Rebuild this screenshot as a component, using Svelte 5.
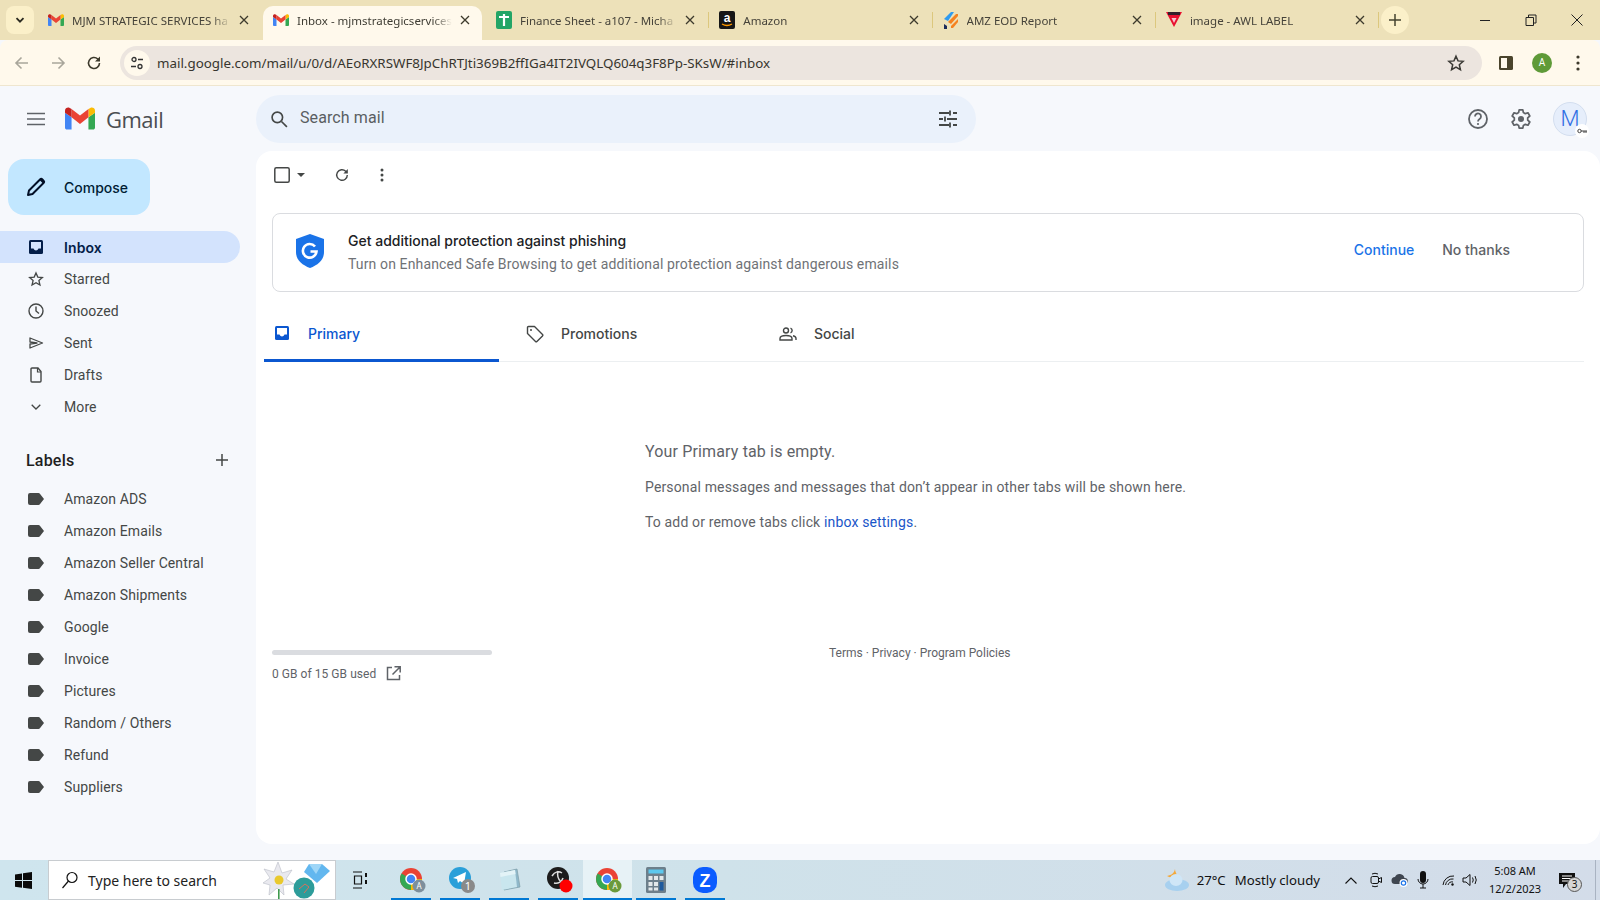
<script>
  const tabs = [
    { title: 'MJM STRATEGIC SERVICES ha', icon: 'gmail' },
    { title: 'Inbox - mjmstrategicservices', icon: 'gmail', active: true },
    { title: 'Finance Sheet - a107 - Micha', icon: 'sheet' },
    { title: 'Amazon', icon: 'amazon' },
    { title: 'AMZ EOD Report', icon: 'amz' },
    { title: 'image - AWL LABEL', icon: 'awl' }
  ];
  const nav = [
    { name: 'Inbox', icon: 'inbox', active: true },
    { name: 'Starred', icon: 'star' },
    { name: 'Snoozed', icon: 'clock' },
    { name: 'Sent', icon: 'sent' },
    { name: 'Drafts', icon: 'draft' },
    { name: 'More', icon: 'more' }
  ];
  const labels = ['Amazon ADS', 'Amazon Emails', 'Amazon Seller Central', 'Amazon Shipments', 'Google', 'Invoice', 'Pictures', 'Random / Others', 'Refund', 'Suppliers'];
  const apps = [
    { type: 'chrome', badge: 'A', tone: '#7d8f9c' },
    { type: 'telegram', badge: '1', tone: '#8a8a8a' },
    { type: 'note', flat: true },
    { type: 'obs' },
    { type: 'chrome', badge: 'A', tone: '#6b9a3c', active: true },
    { type: 'calc', flat: true },
    { type: 'zoom', flat: true }
  ];
</script>

{#snippet gmailLogo(size)}
  <svg width={size} height={size * 0.75} viewBox="0 0 32 24">
    <path fill="#4285f4" d="M2 24h5V11L0 6v16c0 1 1 2 2 2z"/>
    <path fill="#34a853" d="M25 24h5c1 0 2-1 2-2V6l-7 5z"/>
    <path fill="#fbbc04" d="M25 2v9l7-5V4c0-3-3-4-5-3z"/>
    <path fill="#ea4335" d="M7 11V2l9 7 9-7v9l-9 7z"/>
    <path fill="#c5221f" d="M0 4v2l7 5V2L5 1C3 0 0 1 0 4z"/>
  </svg>
{/snippet}

<div class="page">
  <div class="tabstrip">
    <button class="tabsearch">
      <svg width="10" height="10" viewBox="0 0 10 10"><path d="M1.500 3.200 5 6.700l3.500-3.500" fill="none" stroke="#2b2a20" stroke-width="1.800"/></svg>
    </button>
    <div class="tabs">
      {#each tabs as tab}
        <div class="tab" class:active={tab.active}>
          <span class="favicon">
            {#if tab.icon === 'gmail'}
              {@render gmailLogo(16)}
            {:else if tab.icon === 'sheet'}
              <svg width="16" height="18" viewBox="0 0 16 18"><rect width="16" height="18" rx="2" fill="#23a566"/><path d="M3 6h10M8 3v12" stroke="#fff" stroke-width="2.200"/></svg>
            {:else if tab.icon === 'amazon'}
              <svg width="16" height="18" viewBox="0 0 16 18"><rect width="16" height="18" rx="2" fill="#161616"/><text x="8" y="11" font-size="12" font-weight="700" fill="#fff" text-anchor="middle" font-family="Liberation Sans">a</text><path d="M3 13q5 3 10 0" fill="none" stroke="#f90" stroke-width="1.400"/></svg>
            {:else if tab.icon === 'amz'}
              <svg width="16" height="18" viewBox="0 0 16 18"><path d="M1 8 8 1h3L5 10z" fill="#2f9bf0"/><path d="M5 11 13 3h2v2L8 13z" fill="#f58220"/><path d="M8 15l7-7v3l-5 6H8z" fill="#f58220"/><path d="M1 13l3 2v3H1z" fill="#1a2a5a"/></svg>
            {:else}
              <svg width="16" height="18" viewBox="0 0 16 18"><path d="M0 1h16L8 16z" fill="#e8102f"/><path d="M2 1h12v3H2z" fill="#33202a"/><path d="M5.500 7h5L8 12z" fill="#f7c6d0"/></svg>
            {/if}
          </span>
          <span class="tabtitle">{tab.title}</span>
          <svg class="tabclose" width="10" height="10" viewBox="0 0 10 10"><path d="M1 1l8 8M9 1 1 9" stroke="#3d3a2c" stroke-width="1.300"/></svg>
        </div>
      {/each}
    </div>
    <button class="newtab">
      <svg width="12" height="12" viewBox="0 0 12 12"><path d="M6 0v12M0 6h12" stroke="#45432f" stroke-width="1.500"/></svg>
    </button>
    <div class="wincontrols">
      <svg width="12" height="12" viewBox="0 0 12 12"><path d="M1 6.500h10" stroke="#222" stroke-width="1"/></svg>
      <svg width="12" height="12" viewBox="0 0 12 12"><path d="M1 3.500h7.500v8H1zM3.500 3.500V1H11v8H8.500" fill="none" stroke="#222" stroke-width="1"/></svg>
      <svg width="12" height="12" viewBox="0 0 12 12"><path d="M.5.5l11 11M11.500.5l-11 11" stroke="#222" stroke-width="1"/></svg>
    </div>
  </div>

  <div class="toolbar">
    <svg class="navicon" width="16" height="16" viewBox="0 0 16 16"><path d="M14 8H2.500M7.500 2.500 2 8l5.500 5.500" fill="none" stroke="#a9a69b" stroke-width="1.600"/></svg>
    <svg class="navicon" width="16" height="16" viewBox="0 0 16 16"><path d="M2 8h11.500M8.500 2.500 14 8l-5.500 5.500" fill="none" stroke="#a9a69b" stroke-width="1.600"/></svg>
    <svg class="navicon" width="16" height="16" viewBox="0 0 16 16"><path d="M13.500 8A5.500 5.500 0 1 1 11.800 4L13.500 5.700" fill="none" stroke="#3d3a2c" stroke-width="1.600"/><path d="M14 1.500v5h-5z" fill="#3d3a2c"/></svg>
    <div class="omnibox">
      <span class="siteinfo">
        <svg width="14" height="14" viewBox="0 0 14 14"><circle cx="4" cy="3.500" r="2" fill="none" stroke="#333" stroke-width="1.300"/><path d="M8 3.500h5M1 10.500h5" stroke="#333" stroke-width="1.300"/><circle cx="10" cy="10.500" r="2" fill="none" stroke="#333" stroke-width="1.300"/></svg>
      </span>
      <span class="url">mail.google.com/mail/u/0/d/AEoRXRSWF8JpChRTJti369B2ffIGa4IT2IVQLQ604q3F8Pp-SKsW/#inbox</span>
      <svg class="bookmark" width="18" height="18" viewBox="0 0 24 24"><path d="M12 3l2.700 6.200 6.800.6-5.100 4.500 1.500 6.700L12 17.500 6.100 21l1.500-6.700L2.500 9.800l6.800-.6z" fill="none" stroke="#3b3a35" stroke-width="2"/></svg>
    </div>
    <svg class="sidepanel" width="14" height="14" viewBox="0 0 14 14"><rect width="14" height="14" rx="1.500" fill="#4a442c"/><rect x="2" y="2" width="6" height="10" fill="#fff9ec"/></svg>
    <span class="profile">A</span>
    <svg class="chromemenu" width="4" height="16" viewBox="0 0 4 16"><circle cx="2" cy="2" r="1.600" fill="#3d3a2c"/><circle cx="2" cy="8" r="1.600" fill="#3d3a2c"/><circle cx="2" cy="14" r="1.600" fill="#3d3a2c"/></svg>
  </div>

  <div class="gmail">
    <header class="gheader">
      <div class="brand">
        <svg width="20" height="14" viewBox="0 0 20 14"><path d="M1 1.500h18M1 7h18M1 12.500h18" stroke="#5f6368" stroke-width="1.700"/></svg>
        <span class="logo">{@render gmailLogo(30)}</span>
        <span class="wordmark">Gmail</span>
      </div>
      <div class="searchbar">
        <svg width="20" height="20" viewBox="0 0 24 24"><circle cx="10" cy="10" r="6.300" fill="none" stroke="#444746" stroke-width="2"/><path d="M15 15l6.500 6.500" stroke="#444746" stroke-width="2"/></svg>
        <span class="searchtext">Search mail</span>
        <svg class="filters" width="20" height="20" viewBox="0 0 20 20"><path d="M1 4h10M15 4h4M1 10h4M9 10h10M1 16h10M15 16h4M12 1.500v5M7 7.500v5M12 13.500v5" stroke="#444746" stroke-width="1.800"/></svg>
      </div>
      <div class="gactions">
        <svg width="22" height="22" viewBox="0 0 22 22"><circle cx="11" cy="11" r="9" fill="none" stroke="#5f6368" stroke-width="1.800"/><path d="M8 8.500a3 3 0 1 1 4.600 2.500c-1 .7-1.600 1.200-1.600 2.500" fill="none" stroke="#5f6368" stroke-width="1.800"/><circle cx="11" cy="16" r="1.100" fill="#5f6368"/></svg>
        <svg width="22" height="22" viewBox="0 0 24 24"><path d="M10 2h4l.6 3 2.100 1.200 2.900-1 2 3.500-2.300 2 0 2.600 2.300 2-2 3.500-2.900-1-2.100 1.200-.6 3h-4l-.6-3-2.100-1.200-2.900 1-2-3.500 2.300-2 0-2.600-2.300-2 2-3.500 2.900 1L9.400 5z" fill="none" stroke="#5f6368" stroke-width="1.900" stroke-linejoin="round"/><circle cx="12" cy="12" r="3.300" fill="#5f6368"/></svg>
        <div class="avatar">
          <span>M</span>
          <i class="keybadge">
            <svg width="10" height="6" viewBox="0 0 10 6"><circle cx="2.500" cy="3" r="1.700" fill="none" stroke="#444" stroke-width="1"/><path d="M4 3h6M7 3v2M9 3v2" stroke="#444" stroke-width="1"/></svg>
          </i>
        </div>
      </div>
    </header>

    <div class="gbody">
      <aside class="sidebar">
        <button class="compose">
          <svg width="20" height="20" viewBox="0 0 20 20"><path d="M2 18l1-4.500L14 2.500a1.700 1.700 0 0 1 2.400 0l1.100 1.100a1.700 1.700 0 0 1 0 2.400L6.500 17z" fill="none" stroke="#020f26" stroke-width="2" stroke-linejoin="round"/><path d="M13.500 3 17 6.500l.5-.5a1.700 1.700 0 0 0 0-2.400l-1.100-1.100a1.700 1.700 0 0 0-2.400 0z" fill="#020f26"/></svg>
          <span>Compose</span>
        </button>

        <nav class="navlist">
          {#each nav as item}
            <div class="navrow" class:active={item.active}>
              <span class="navglyph">
                {#if item.icon === 'inbox'}
                  <svg width="14" height="14" viewBox="0 0 14 14"><rect width="14" height="14" rx="1.500" fill="#041e49"/><path d="M2 2h10v6.500H9.500C9 9.800 8 10.500 7 10.500S5 9.800 4.500 8.500H2z" fill="#d3e3fd"/></svg>
                {:else if item.icon === 'star'}
                  <svg width="16" height="16" viewBox="0 0 24 24"><path d="M12 3l2.700 6.200 6.800.6-5.100 4.500 1.500 6.700L12 17.500 6.100 21l1.500-6.700L2.500 9.800l6.800-.6z" fill="none" stroke="#444746" stroke-width="2"/></svg>
                {:else if item.icon === 'clock'}
                  <svg width="16" height="16" viewBox="0 0 16 16"><circle cx="8" cy="8" r="7" fill="none" stroke="#444746" stroke-width="1.400"/><path d="M8 3.500V8l3 2.500" fill="none" stroke="#444746" stroke-width="1.400"/></svg>
                {:else if item.icon === 'sent'}
                  <svg width="15" height="12" viewBox="0 0 15 12"><path d="M1 1l12.500 5L1 11V7l7-1-7-1z" fill="none" stroke="#444746" stroke-width="1.300" stroke-linejoin="round"/></svg>
                {:else if item.icon === 'draft'}
                  <svg width="12" height="16" viewBox="0 0 12 16"><path d="M1 2a1 1 0 0 1 1-1h6l3 3.500V14a1 1 0 0 1-1 1H2a1 1 0 0 1-1-1z" fill="none" stroke="#444746" stroke-width="1.400"/><path d="M7.500 1v4H11" fill="none" stroke="#444746" stroke-width="1.200"/></svg>
                {:else}
                  <svg width="10" height="6" viewBox="0 0 10 6"><path d="M.7.700 5 5l4.300-4.300" fill="none" stroke="#444746" stroke-width="1.300"/></svg>
                {/if}
              </span>
              <span>{item.name}</span>
            </div>
          {/each}
        </nav>

        <div class="labelshead">
          <span>Labels</span>
          <svg width="12" height="12" viewBox="0 0 12 12"><path d="M6 0v12M0 6h12" stroke="#444746" stroke-width="1.500"/></svg>
        </div>

        <div class="labellist">
          {#each labels as label}
            <div class="navrow">
              <span class="navglyph">
                <svg width="16" height="12" viewBox="0 0 16 12"><path d="M2 0h8.500c.6 0 1.100.3 1.400.7L16 6l-4.100 5.300c-.3.400-.8.700-1.400.7H2a2 2 0 0 1-2-2V2a2 2 0 0 1 2-2z" fill="#444746"/></svg>
              </span>
              <span>{label}</span>
            </div>
          {/each}
        </div>
      </aside>

      <main class="card">
        <div class="actions">
          <svg width="16" height="16" viewBox="0 0 16 16"><rect x=".8" y=".8" width="14.400" height="14.400" rx="1.500" fill="none" stroke="#444746" stroke-width="1.500"/></svg>
          <svg class="caret" width="8" height="4" viewBox="0 0 10 5"><path d="M0 0h10L5 5z" fill="#444746"/></svg>
          <svg class="refresh" width="14" height="14" viewBox="0 0 14 14"><path d="M12.300 7A5.300 5.300 0 1 1 10.700 3.200l1.300 1.300" fill="none" stroke="#444746" stroke-width="1.400"/><path d="M12.800 1v4.400H8.400z" fill="#444746"/></svg>
          <svg class="kebab" width="4" height="14" viewBox="0 0 4 14"><circle cx="2" cy="2" r="1.500" fill="#444746"/><circle cx="2" cy="7" r="1.500" fill="#444746"/><circle cx="2" cy="12" r="1.500" fill="#444746"/></svg>
        </div>

        <div class="banner">
          <svg class="shield" width="28" height="34" viewBox="0 0 28 34"><path d="M14 0 28 5v13c0 8-6 13-14 16C6 31 0 26 0 18V5z" fill="#1a73e8"/><path d="M19 12.500A6.800 6.800 0 1 0 20.500 17.500H14.500" fill="none" stroke="#fff" stroke-width="2.600"/></svg>
          <div class="bannertext">
            <div class="bannertitle">Get additional protection against phishing</div>
            <div class="bannersub">Turn on Enhanced Safe Browsing to get additional protection against dangerous emails</div>
          </div>
          <span class="continue">Continue</span>
          <span class="nothanks">No thanks</span>
        </div>

        <div class="inboxtabs">
          <div class="itab selected">
            <svg width="14" height="14" viewBox="0 0 14 14"><rect width="14" height="14" rx="1.500" fill="#0b57d0"/><path d="M2 2h10v6.500H9.500C9 9.800 8 10.500 7 10.500S5 9.800 4.500 8.500H2z" fill="#fff"/></svg>
            <span>Primary</span>
          </div>
          <div class="itab">
            <svg width="18" height="18" viewBox="0 0 18 18"><path d="M1.500 2.500a1 1 0 0 1 1-1h6l8 8a1 1 0 0 1 0 1.400l-5.600 5.600a1 1 0 0 1-1.400 0l-8-8z" fill="none" stroke="#444746" stroke-width="1.400" stroke-linejoin="round"/><circle cx="5" cy="5" r="1" fill="#444746"/></svg>
            <span>Promotions</span>
          </div>
          <div class="itab">
            <svg width="18" height="14" viewBox="0 0 18 14"><circle cx="7" cy="3.500" r="2.500" fill="none" stroke="#444746" stroke-width="1.400"/><path d="M1 13v-1.500C1 9.500 4 8.500 7 8.500s6 1 6 3V13z" fill="none" stroke="#444746" stroke-width="1.400"/><path d="M11.500 1.200a2.500 2.500 0 0 1 0 4.700M14 8.700c2 .5 3 1.400 3 2.800V13" fill="none" stroke="#444746" stroke-width="1.400"/></svg>
            <span>Social</span>
          </div>
        </div>

        <div class="empty">
          <div class="emptytitle">Your Primary tab is empty.</div>
          <p>Personal messages and messages that don’t appear in other tabs will be shown here.</p>
          <p>To add or remove tabs click <span class="link">inbox settings</span>.</p>
        </div>

        <footer class="gfooter">
          <div class="storage">
            <div class="storagebar"></div>
            <div class="storageinfo">
              <span>0 GB of 15 GB used</span>
              <svg width="15" height="15" viewBox="0 0 15 15"><path d="M6 1.500H1.500v12h12V9M8.500.8h5.700v5.700M14 1 6.500 8.500" fill="none" stroke="#5f6368" stroke-width="1.500"/></svg>
            </div>
          </div>
          <div class="policies">Terms · Privacy · Program Policies</div>
        </footer>
      </main>
    </div>
  </div>

  <div class="taskbar">
    <svg class="winlogo" width="17" height="17" viewBox="0 0 17 17"><path d="M0 2.400 7 1.400v6.700H0zM8 1.300 17 0v8.100H8zM0 9h7v6.700L0 14.700zM8 9h9v8l-9-1.300z" fill="#0a0a0a"/></svg>
    <div class="tasksearch">
      <svg width="18" height="18" viewBox="0 0 18 18"><circle cx="11" cy="6.500" r="5" fill="none" stroke="#111" stroke-width="1.200"/><path d="M7.500 10 1.500 17" stroke="#111" stroke-width="1.200"/></svg>
      <span class="tasksearchtext">Type here to search</span>
      <svg class="daffodil" width="69" height="38" viewBox="0 0 69 38">
        <path d="M15 1l4 11 10-3-6 9 8 5-11 1 1 10-7-7-8 7 1-10-7-2 7-5-6-9 10 3z" fill="#e9e9ef" stroke="#b9bcc6" stroke-width=".6"/>
        <circle cx="16" cy="19" r="4.500" fill="#e9c92e"/>
        <path d="M15 28v10h1.600V28z" fill="#3f9a4d"/>
        <path d="M46 3h13l8 7-13 12-13-11z" fill="#62b7ef"/>
        <path d="M46 3h13l-6 10z" fill="#9ed6f7"/>
        <ellipse cx="41" cy="27" rx="10.500" ry="10.500" fill="#2d9c9a"/>
        <path d="M36 28l6-5 4 3-5 6" fill="none" stroke="#d9705a" stroke-width="1"/>
      </svg>
    </div>
    <div class="taskapps">
      <span class="taskview">
        <svg width="16" height="18" viewBox="0 0 16 18"><path d="M1 1h9M1 17h9M2.500 5h7v8h-7z" fill="none" stroke="#111" stroke-width="1.200"/><path d="M13 2h2v4h-2zM13 9h2v4h-2z" fill="#111"/></svg>
      </span>
      {#each apps as app}
        <span class="taskapp" class:active={app.active} class:flat={app.flat}>
          <svg width="28" height="28" viewBox="0 0 28 28">
            {#if app.type === 'chrome'}
              <circle cx="12" cy="13" r="11" fill="#ea4335"/>
              <path d="M12 13 23 13A11 11 0 0 1 12 24z" fill="#fbbc04"/>
              <path d="M12 13 12 24A11 11 0 0 1 2.500 7.500z" fill="#34a853"/>
              <circle cx="12" cy="13" r="5" fill="#4285f4" stroke="#fff" stroke-width="1.500"/>
              <circle cx="20" cy="20" r="6.500" fill={app.tone}/>
              <text x="20" y="23" font-size="8" fill="#fff" text-anchor="middle" font-family="Noto Sans">{app.badge}</text>
            {:else if app.type === 'telegram'}
              <circle cx="12" cy="12" r="11" fill="#2a9fd9"/>
              <path d="M5 12 18 6l-2 12-4-3-2 2-1-4z" fill="#fff"/>
              <circle cx="20" cy="20" r="7" fill={app.tone}/>
              <text x="20" y="24" font-size="11" fill="#fff" text-anchor="middle" font-family="Noto Sans">{app.badge}</text>
            {:else if app.type === 'note'}
              <path d="M9 6l13-3 3 18-16 3z" fill="#8fb8ca" stroke="#7d9da8" stroke-width=".7"/>
              <path d="M5 7l15-3 2 17-15 3z" fill="#c9e6ee"/>
              <path d="M5 7l15-3 .5 4-15 3z" fill="#e3f3f7"/>
            {:else if app.type === 'obs'}
              <circle cx="12" cy="12" r="11" fill="#1c1c1c"/>
              <path d="M6 10c3-5 7-5 10-3M8 17c4 1 8-1 9-5M12 5c-1 4 0 8 3 11" fill="none" stroke="#ddd" stroke-width="1.500"/>
              <circle cx="20" cy="20" r="6.500" fill="#f00"/>
            {:else if app.type === 'calc'}
              <rect x="4" y="1" width="20" height="26" rx="1.500" fill="#6d7f8b"/>
              <rect x="6.500" y="3.500" width="15" height="4" fill="#5cc8ee"/>
              <path d="M6.500 10h4v4h-4zM12 10h4v4h-4zM17.500 10h4v4h-4zM6.500 16h4v4h-4zM12 16h4v4h-4zM6.500 21.500h4v3h-4zM12 21.500h4v3h-4z" fill="#e3e8ea"/>
              <rect x="17.500" y="16" width="4" height="8.500" fill="#1d5a9e"/>
            {:else}
              <rect x="2" y="1" width="24" height="26" rx="10" fill="#0b5cff"/>
              <text x="14" y="21" font-size="18" font-weight="700" fill="#fff" text-anchor="middle" font-family="Liberation Sans">Z</text>
            {/if}
          </svg>
        </span>
      {/each}
    </div>

    <div class="tray">
      <svg class="weather" width="26" height="24" viewBox="0 0 26 24"><path d="M11 1c-1 4-3 6-8 7 3 2 7 2 10-1-1-2-2-4-2-6z" fill="#f4a83a"/><ellipse cx="13" cy="17" rx="12" ry="6" fill="#a7d0ef"/><ellipse cx="12" cy="12" rx="6.500" ry="6" fill="#cfe6f7"/></svg>
      <span class="temp">27°C</span>
      <span class="cond">Mostly cloudy</span>
      <svg class="chev" width="12" height="7" viewBox="0 0 12 7"><path d="M.5 6.500 6 1l5.500 5.500" fill="none" stroke="#111" stroke-width="1.100"/></svg>
      <svg class="cam" width="12" height="16" viewBox="0 0 12 16"><rect x="1" y="4.500" width="7.500" height="7" rx="1.500" fill="none" stroke="#111"/><path d="M8.500 7l3-1.500v5L8.500 9zM2 2q3-1.500 6 0M2 14q3 1.500 6 0" fill="none" stroke="#111"/></svg>
      <svg class="cloud" width="17" height="14" viewBox="0 0 17 14"><path d="M4 11a3.500 3.500 0 0 1 0-7 5 5 0 0 1 9.500 1A3 3 0 0 1 14 11z" fill="#3f4650"/><circle cx="12.500" cy="10" r="4" fill="#fff"/><circle cx="12.500" cy="10" r="2.200" fill="none" stroke="#1a73e8" stroke-width="1.200"/></svg>
      <svg class="mic" width="12" height="18" viewBox="0 0 12 18"><rect x="3" y="0" width="6" height="12" rx="3" fill="#111"/><path d="M1 8a5 5 0 0 0 10 0M6 13v4M3 17h6" fill="none" stroke="#111"/></svg>
      <svg class="wifi" width="14" height="12" viewBox="0 0 14 12"><path d="M1 11a10 10 0 0 1 11-9M3.500 11a7 7 0 0 1 8-6M6 11a4 4 0 0 1 5-3" fill="none" stroke="#111"/><circle cx="10.500" cy="10.500" r="1.200" fill="#111"/></svg>
      <svg class="speaker" width="16" height="14" viewBox="0 0 16 14"><path d="M1 5h3l4-3.500v11L4 9H1z" fill="none" stroke="#111"/><path d="M10.500 4.500q1.500 2.500 0 5M13 3q2.500 4 0 8" fill="none" stroke="#111"/></svg>
      <div class="clock">
        <span>5:08 AM</span>
        <span>12/2/2023</span>
      </div>
      <div class="notif">
        <svg width="16" height="15" viewBox="0 0 16 15"><path d="M0 0h16v11H7l-3 4v-4H0z" fill="#111"/><path d="M3 3h10M3 5.500h10M3 8h7" stroke="#fff"/></svg>
        <i>3</i>
      </div>
      <span class="showdesktop"></span>
    </div>
  </div>
</div>

<style>
  :global(body) {
    margin: 0;
    background: #f6f8fc;
  }

  .page {
    width: 1600px;
    height: 900px;
    display: flex;
    flex-direction: column;
    overflow: hidden;
    font-family: Roboto, sans-serif;
    color: #1f1f1f;
  }

  button {
    border: none;
    padding: 0;
    font: inherit;
  }

  /* chrome tabs */
  .tabstrip {
    height: 40px;
    flex: none;
    display: flex;
    align-items: center;
    background: #ede1b9;
    padding-left: 6px;
    font-family: "Noto Sans", sans-serif;
    font-size: 11.500px;
    color: #46433a;
    position: relative;
  }

  .tabsearch {
    width: 28px;
    height: 28px;
    border-radius: 8px;
    background: #fbf0c9;
    display: flex;
    align-items: center;
    justify-content: center;
  }

  .tabs {
    display: flex;
    align-self: flex-end;
    height: 34px;
    margin-left: 4px;
  }

  .tab {
    width: 223.300px;
    height: 34px;
    box-sizing: border-box;
    display: flex;
    align-items: center;
    padding: 0 14px 6px 10px;
    gap: 8px;
    position: relative;
  }

  .tab:not(.active):not(:first-child)::after {
    content: "";
    position: absolute;
    right: 0;
    top: 6px;
    height: 16px;
    width: 1px;
    background: #dcc77d;
  }

  .tab:first-child {
    width: 225px;
  }

  .tab.active {
    width: 219px;
    margin-right: 4px;
    background: #fff9ec;
    border-radius: 10px 10px 0 0;
    padding-right: 12px;
    color: #3e3c33;
  }

  .favicon {
    display: flex;
    flex: none;
    width: 16px;
    justify-content: center;
  }

  .tabtitle {
    flex: 1;
    min-width: 0;
    white-space: nowrap;
    overflow: hidden;
    -webkit-mask-image: linear-gradient(to right, #000 88%, transparent);
    mask-image: linear-gradient(to right, #000 88%, transparent);
  }

  .tabclose {
    flex: none;
  }

  .newtab {
    width: 28px;
    height: 28px;
    margin-left: 2px;
    border-radius: 50%;
    background: #fbf0c9;
    display: flex;
    align-items: center;
    justify-content: center;
  }

  .wincontrols {
    margin-left: auto;
    display: flex;
    gap: 34px;
    padding-right: 17px;
    align-items: center;
  }

  /* chrome toolbar */
  .toolbar {
    height: 46px;
    flex: none;
    box-sizing: border-box;
    display: flex;
    align-items: center;
    background: #fff9ec;
    border-bottom: 1px solid #efe6cf;
    padding: 0 14px;
    border-radius: 8px 8px 0 0;
  }

  .navicon {
    margin-right: 20px;
  }

  .omnibox {
    flex: none;
    width: 1362px;
    height: 34px;
    margin-left: -2px;
    box-sizing: border-box;
    border-radius: 17px;
    background: #ece5df;
    display: flex;
    align-items: center;
    padding: 0 17px 0 4px;
  }

  .siteinfo {
    width: 26px;
    height: 26px;
    border-radius: 50%;
    background: #fff9ec;
    display: flex;
    align-items: center;
    justify-content: center;
    margin-right: 7px;
  }

  .url {
    flex: 1;
    font-family: "Noto Sans", sans-serif;
    font-size: 13.350px;
    color: #37352e;
    white-space: nowrap;
  }

  .sidepanel {
    margin-left: 17px;
  }

  .profile {
    width: 20px;
    height: 20px;
    margin-left: 19px;
    border-radius: 50%;
    background: #5f9a38;
    color: #fff;
    font-size: 10px;
    display: flex;
    align-items: center;
    justify-content: center;
  }

  .chromemenu {
    margin-left: 24px;
  }

  /* gmail */
  .gmail {
    flex: 1;
    min-height: 0;
    display: flex;
    flex-direction: column;
    background: #f6f8fc;
  }

  .gheader {
    height: 65px;
    flex: none;
    display: flex;
    align-items: center;
  }

  .brand {
    width: 256px;
    flex: none;
    box-sizing: border-box;
    padding-left: 26px;
    display: flex;
    align-items: center;
  }

  .logo {
    display: flex;
    margin-left: 19px;
  }

  .wordmark {
    margin-left: 11px;
    font-family: "Open Sans", sans-serif;
    font-size: 22px;
    color: #4b4e52;
    letter-spacing: -0.5px;
  }

  .searchbar {
    width: 720px;
    height: 48px;
    box-sizing: border-box;
    margin-top: 1px;
    border-radius: 24px;
    background: #eaf1fb;
    display: flex;
    align-items: center;
    padding: 0 18px 0 13px;
  }

  .searchtext {
    flex: 1;
    margin-left: 11px;
    padding-bottom: 3px;
    font-size: 16px;
    letter-spacing: 0.1px;
    color: #5a5e62;
  }

  .gactions {
    margin-left: auto;
    display: flex;
    align-items: center;
    gap: 21px;
    padding-right: 13px;
  }

  .avatar {
    width: 32px;
    height: 32px;
    border-radius: 50%;
    background: #e6eefb;
    border: 1px solid #d3deef;
    position: relative;
    display: flex;
    align-items: center;
    justify-content: center;
    font-size: 22px;
    font-weight: 300;
    color: #2f6fe4;
  }

  .keybadge {
    position: absolute;
    right: -3px;
    bottom: -3px;
    width: 14px;
    height: 14px;
    border-radius: 50%;
    background: #fff;
    display: flex;
    align-items: center;
    justify-content: center;
  }

  .gbody {
    flex: 1;
    min-height: 0;
    display: flex;
  }

  .sidebar {
    width: 256px;
    flex: none;
    font-size: 14px;
    letter-spacing: 0.1px;
    color: #444746;
    padding-top: 8px;
    box-sizing: border-box;
  }

  .compose {
    width: 142px;
    height: 56px;
    margin-left: 8px;
    border-radius: 16px;
    background: #c2e7ff;
    color: #001d35;
    font-family: Inter, sans-serif;
    font-size: 14px;
    font-weight: 500;
    display: flex;
    align-items: center;
    gap: 18px;
    padding-left: 18px;
    box-sizing: border-box;
  }

  .navlist {
    margin-top: 16px;
  }

  .navrow {
    width: 240px;
    height: 32px;
    box-sizing: border-box;
    display: flex;
    align-items: center;
    border-radius: 0 16px 16px 0;
  }

  .navrow.active {
    background: #d3e3fd;
    color: #041e49;
    font-family: Inter, sans-serif;
    font-weight: 600;
  }

  .navglyph {
    width: 20px;
    margin: 0 18px 0 26px;
    display: flex;
    justify-content: center;
  }

  .labelshead {
    width: 228px;
    box-sizing: border-box;
    display: flex;
    justify-content: space-between;
    align-items: center;
    padding-left: 26px;
    margin-top: 26px;
    height: 22px;
    font-size: 16px;
    font-weight: 500;
    letter-spacing: 0.2px;
    color: #1f1f1f;
  }

  .labellist {
    margin-top: 12px;
  }

  /* main card */
  .card {
    flex: 1;
    min-width: 0;
    height: 693px;
    box-sizing: border-box;
    background: #fff;
    border-radius: 16px;
    padding-left: 8px;
    display: flex;
    flex-direction: column;
  }

  .actions {
    height: 48px;
    display: flex;
    align-items: center;
    padding-left: 10px;
    flex: none;
  }

  .caret {
    margin-left: 7px;
  }

  .refresh {
    margin-left: 30px;
  }

  .kebab {
    margin-left: 31px;
  }

  .banner {
    height: 79px;
    flex: none;
    box-sizing: border-box;
    width: 1312px;
    margin: 14px 0 0 8px;
    border: 1px solid #dadce0;
    border-radius: 8px;
    display: flex;
    align-items: center;
    padding-left: 23px;
    font-size: 14px;
  }

  .shield {
    flex: none;
    margin-bottom: 4px;
  }

  .bannertext {
    margin-left: 24px;
    padding-top: 2px;
    flex: 1;
  }

  .bannertitle {
    font-family: Inter, sans-serif;
    font-weight: 500;
    color: #202124;
    line-height: 22px;
  }

  .bannersub {
    color: #6f7276;
    line-height: 25px;
    letter-spacing: 0.13px;
  }

  .continue {
    font-family: Inter, sans-serif;
    color: #1a73e8;
    font-weight: 500;
    margin: 0 28px 6px 0;
  }

  .nothanks {
    font-family: Inter, sans-serif;
    color: #5f6368;
    font-weight: 500;
    margin: 0 73px 6px 0;
  }

  .inboxtabs {
    display: flex;
    height: 56px;
    flex: none;
    margin-top: 14px;
    border-bottom: 1px solid #eceff1;
    width: 1320px;
    box-sizing: border-box;
    font-family: Inter, sans-serif;
    font-size: 14px;
    font-weight: 500;
    color: #444746;
  }

  .itab {
    width: 253px;
    box-sizing: border-box;
    display: flex;
    align-items: center;
    gap: 17px;
    padding-left: 27px;
  }

  .itab:first-child {
    width: 235px;
    padding-left: 11px;
  }

  .itab.selected {
    color: #0b57d0;
    border-bottom: 3px solid #0b57d0;
    margin-bottom: -1px;
    padding-top: 1px;
    gap: 19px;
  }

  .empty {
    flex: none;
    margin-top: 79px;
    padding-left: 381px;
    font-size: 14px;
    letter-spacing: 0.15px;
    color: #5f6368;
  }

  .emptytitle {
    font-size: 16px;
    line-height: 22px;
    margin-bottom: 15px;
  }

  .empty p {
    margin: 0 0 17px;
    line-height: 18px;
  }

  .link {
    color: #1a56c8;
  }

  .gfooter {
    display: flex;
    margin-top: 102px;
    padding-left: 8px;
  }

  .storage {
    width: 220px;
    flex: none;
  }

  .storagebar {
    height: 5px;
    border-radius: 3px;
    background: #dadce0;
  }

  .storageinfo {
    display: flex;
    align-items: center;
    gap: 10px;
    margin-top: 11px;
    font-size: 12px;
    letter-spacing: 0.05px;
    color: #5f6368;
  }

  .policies {
    margin-left: 337px;
    margin-top: -4px;
    font-size: 12px;
    color: #5f6368;
    white-space: nowrap;
  }

  /* windows taskbar */
  .taskbar {
    height: 40px;
    flex: none;
    display: flex;
    align-items: center;
    background: linear-gradient(to right, #cfe5ee, #cfe2ea 45%, #d3dce9);
    font-family: "Noto Sans", sans-serif;
    color: #111;
  }

  .winlogo {
    margin-left: 15px;
    flex: none;
  }

  .tasksearch {
    width: 288px;
    height: 40px;
    margin-left: 16px;
    flex: none;
    box-sizing: border-box;
    background: #fff;
    border: 1px solid #c8ccd0;
    display: flex;
    align-items: center;
    padding-left: 12px;
    overflow: hidden;
    font-size: 14px;
  }

  .tasksearchtext {
    margin-left: 9px;
    flex: 1;
    color: #222;
  }

  .daffodil {
    flex: none;
    margin-right: 3px;
  }

  .taskapps {
    display: flex;
    height: 100%;
    margin-left: 1px;
  }

  .taskview {
    width: 49.500px;
    padding-right: 4px;
    box-sizing: border-box;
    display: flex;
    align-items: center;
    justify-content: center;
  }

  .taskapp {
    width: 49px;
    box-sizing: border-box;
    display: flex;
    align-items: center;
    justify-content: center;
    padding-left: 3px;
    position: relative;
  }

  .taskapp.flat {
    padding-left: 0;
  }

  .taskapp.active {
    background: #e7f2f6;
  }

  .taskapp::after {
    content: "";
    position: absolute;
    left: 4.500px;
    right: 4.500px;
    bottom: 0;
    height: 2px;
    background: #0078d4;
  }

  .taskapp.active::after {
    left: 0;
    right: 0;
  }

  .tray {
    margin-left: auto;
    display: flex;
    align-items: center;
    font-size: 13.200px;
    height: 100%;
  }

  .temp {
    margin-left: 7px;
  }

  .cond {
    margin-left: 9px;
  }

  .chev {
    margin-left: 25px;
  }

  .cam {
    margin-left: 13px;
  }

  .cloud {
    margin-left: 9px;
  }

  .mic {
    margin-left: 9px;
  }

  .wifi {
    margin-left: 13px;
  }

  .speaker {
    margin-left: 6px;
  }

  .clock {
    margin-left: 9px;
    display: flex;
    flex-direction: column;
    align-items: center;
    font-size: 11px;
    line-height: 18px;
    width: 56px;
  }

  .notif {
    position: relative;
    margin-left: 16px;
    display: flex;
    align-items: center;
    height: 100%;
  }

  .notif i {
    position: absolute;
    left: 8px;
    top: 17px;
    width: 15px;
    height: 15px;
    border-radius: 50%;
    background: #d6d6d6;
    border: 1px solid #555;
    box-sizing: border-box;
    font-style: normal;
    font-size: 10px;
    line-height: 13px;
    text-align: center;
  }

  .showdesktop {
    width: 1px;
    height: 100%;
    margin: 0 4px 0 20px;
    background: #a9b3c2;
  }
</style>
